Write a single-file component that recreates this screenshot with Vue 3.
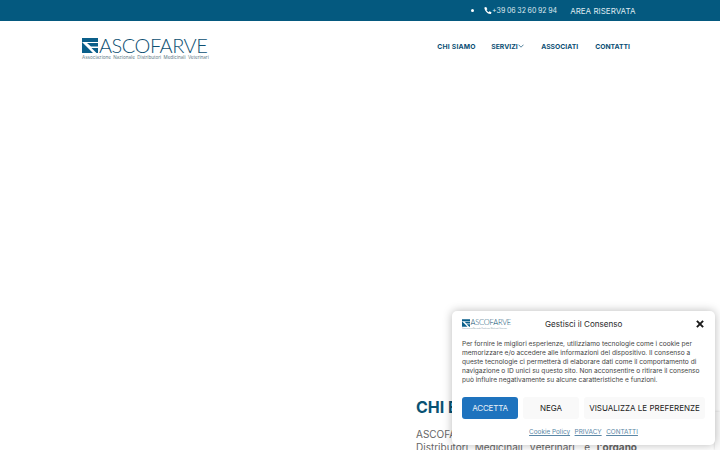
<template>
  <div class="page">
    <div class="topbar">
      <div class="topbar-inner">
        <span class="dot"></span>
        <svg class="phone" width="8" height="9" viewBox="0 0 24 24"><path fill="#fff" d="M6.6 1.5 2.8 2.6C1.5 3 1 4 1.2 5.4 2.6 14.500 9.500 21.400 18.600 22.800c1.400.2 2.400-.3 2.800-1.600l1.100-3.800-6.200-3-2.400 2.800c-2.900-1.400-5.100-3.600-6.500-6.500l2.800-2.400z"/></svg>
        <span class="tel">+39 06 32 60 92 94</span>
        <span class="area">AREA RISERVATA</span>
      </div>
    </div>

    <header class="header">
      <div class="logo">
        <div class="logo-row">
          <svg class="logo-mark" width="16" height="15" viewBox="0 0 16 15">
            <rect width="16" height="4" fill="#0b5f8a"/>
            <path d="M5 5H16V8.500H9ZM0 4 11 15H0ZM9.500 10H16V15H14.500Z" fill="#0b5f8a"/>
          </svg>
          <span class="logo-name">ASCOFARVE</span>
        </div>
        <div class="logo-sub">Associazione Nazionale Distributori Medicinali Veterinari</div>
      </div>
      <nav class="nav">
        <a>CHI SIAMO</a>
        <a class="has-sub">SERVIZI
          <svg width="6" height="4" viewBox="0 0 6 4"><path d="M.5.700 3 3.200 5.500.700" fill="none" stroke="#0b4f74" stroke-width=".7"/></svg>
        </a>
        <a>ASSOCIATI</a>
        <a>CONTATTI</a>
      </nav>
    </header>

    <section class="hero"></section>

    <section class="about">
      <div class="about-spacer"></div>
      <div class="about-text">
        <h2>CHI E' ASCOFARVE</h2>
        <p>ASCOFARVE è l'Associazione Nazionale dei Distributori Medicinali Veterinari, e <b>l'organo</b></p>
      </div>
    </section>

    <div class="recaptcha"></div>

    <div class="consent">
      <div class="consent-head">
        <div class="mini-logo">
          <div class="mini-row">
            <svg width="8" height="8" viewBox="0 0 16 15">
              <rect width="16" height="4" fill="#0b5f8a"/>
              <path d="M5 5H16V8.500H9ZM0 4 11 15H0ZM9.500 10H16V15H14.500Z" fill="#0b5f8a"/>
            </svg>
            <span>ASCOFARVE</span>
          </div>
          <div class="mini-sub">Associazione Nazionale Distributori Medicinali Veterinari</div>
        </div>
        <div class="consent-title">Gestisci il Consenso</div>
        <svg class="close" width="8" height="8" viewBox="0 0 9 9"><path d="M1 1 8 8M8 1 1 8" stroke="#1a1a1a" stroke-width="2.200"/></svg>
      </div>
      <p class="consent-body">Per fornire le migliori esperienze, utilizziamo tecnologie come i cookie per memorizzare e/o accedere alle informazioni del dispositivo. Il consenso a queste tecnologie ci permetterà di elaborare dati come il comportamento di navigazione o ID unici su questo sito. Non acconsentire o ritirare il consenso può influire negativamente su alcune caratteristiche e funzioni.</p>
      <div class="consent-buttons">
        <button class="btn accept">ACCETTA</button>
        <button class="btn deny">NEGA</button>
        <button class="btn prefs">VISUALIZZA LE PREFERENZE</button>
      </div>
      <div class="consent-links">
        <a>Cookie Policy</a>
        <a>PRIVACY</a>
        <a>CONTATTI</a>
      </div>
    </div>
  </div>
</template>

<script setup>
</script>

<style>
html, body {
  margin: 0;
  overflow: hidden;
  background: #fff;
}
</style>

<style scoped>
.page {
  width: 720px;
  height: 450px;
  overflow: hidden;
  position: relative;
  font-family: Inter, "Noto Sans", sans-serif;
}

.topbar {
  height: 21px;
  background: #04597f;
  color: #dfeaf0;
}

.topbar-inner {
  height: 100%;
  display: flex;
  align-items: center;
  padding-left: 471px;
}

.dot {
  width: 3px;
  height: 3px;
  border-radius: 50%;
  background: #fff;
  margin-right: 10px;
}

.tel {
  font-size: 7px;
  word-spacing: -0.300px;
}

.area {
  margin-left: 13px;
  font-size: 8px;
}

.header {
  height: 50px;
  display: flex;
  align-items: center;
  justify-content: space-between;
  padding: 0 90px 0 82px;
}

.logo {
  padding-top: 5px;
}

.logo-row {
  display: flex;
  align-items: center;
  gap: 1px;
  height: 15px;
}

.logo-name {
  font-family: Lato, sans-serif;
  font-weight: 300;
  font-size: 20px;
  color: #0d4f72;
  letter-spacing: -0.500px;
}

.logo-sub {
  font-size: 4.600px;
  color: #5f7a88;
  word-spacing: 1.100px;
  margin-top: 2px;
  white-space: nowrap;
}

.nav {
  display: flex;
  gap: 17px;
  font-size: 6.800px;
  font-weight: 700;
  color: #0b4f74;
}

.nav a:first-child {
  letter-spacing: 0.200px;
  margin-right: -1.500px;
}

.has-sub {
  word-spacing: -1px;
}

.nav svg {
  vertical-align: 1px;
}

.hero {
  height: 320px;
}

.about {
  display: flex;
}

.about-spacer {
  width: 416px;
}

.about-text {
  width: 221px;
}

.about-text h2 {
  margin: 0 0 5px;
  font-size: 16px;
  font-weight: 700;
  line-height: 32px;
  color: #0a5273;
  white-space: nowrap;
}

.about-text p {
  margin: 0;
  font-size: 10px;
  line-height: 13px;
  color: #666;
  text-align: justify;
  text-align-last: justify;
}

.recaptcha {
  position: absolute;
  right: 0;
  top: 412px;
  width: 5px;
  height: 38px;
  background: #fafafa;
  box-shadow: 0 0 3px rgba(0, 0, 0, 0.2);
}

.consent {
  position: absolute;
  left: 452px;
  top: 311px;
  width: 243px;
  height: 134px;
  padding: 0 10px;
  background: #fff;
  border-radius: 5px;
  box-shadow: 0 0 10px rgba(0, 0, 0, 0.28);
  color: #222;
}

.consent-head {
  display: flex;
  align-items: center;
  height: 26px;
  margin-bottom: 2.500px;
}

.mini-logo {
  width: 50px;
  flex-shrink: 0;
  overflow: hidden;
}

.mini-row {
  display: flex;
  align-items: center;
  height: 8px;
  gap: 0.500px;
  font-family: Lato, sans-serif;
  font-size: 7.500px;
  font-weight: 300;
  letter-spacing: -0.200px;
  color: #0d4f72;
}

.mini-row svg {
  flex-shrink: 0;
}

.mini-sub {
  font-size: 1.700px;
  line-height: 3px;
  color: #7f97a4;
  white-space: nowrap;
}

.consent-title {
  margin-left: 33px;
  font-size: 8.100px;
  color: #2a2a2a;
}

.close {
  margin-left: auto;
  margin-right: 1px;
}

.consent-body {
  margin: 0;
  font-size: 6.600px;
  line-height: 9px;
  color: #444;
}

.consent-buttons {
  display: flex;
  gap: 5px;
  margin-top: 12.500px;
}

.btn {
  height: 22px;
  border: none;
  border-radius: 3px;
  font-family: inherit;
  font-size: 8px;
  padding: 0;
}

.accept {
  width: 56px;
  background: #1e73be;
  color: #e8f1f8;
  letter-spacing: -0.200px;
}

.deny {
  width: 56px;
  background: #f9f9f9;
  color: #222;
}

.prefs {
  width: 123px;
  background: #f9f9f9;
  color: #222;
  flex: 1;
}

.consent-links {
  display: flex;
  justify-content: center;
  gap: 4.500px;
  margin-top: 9px;
  font-size: 6.400px;
  color: #5b87a6;
}

.consent-links a {
  text-decoration: underline;
}
</style>
